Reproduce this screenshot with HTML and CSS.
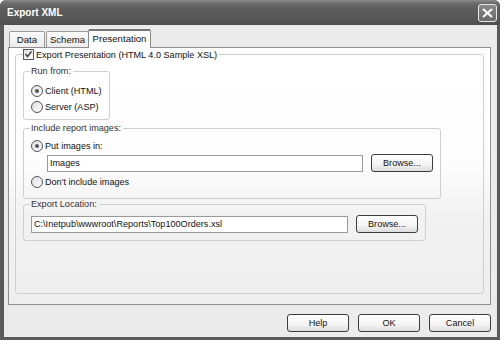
FILE: index.html
```html
<!DOCTYPE html>
<html lang="en">
<head>
    <meta charset="UTF-8">
    <title>Export XML</title>
    <link rel="stylesheet" href="styles.css">
</head>
<body>
    <div class="window">
        <div class="titlebar">
            <span class="title">Export XML</span>
            <div class="close-btn">
                <svg width="11" height="10" viewBox="0 0 11 10">
                    <path d="M1 1 L10 9 M10 1 L1 9" stroke="#fff" stroke-width="2" fill="none"/>
                </svg>
            </div>
        </div>
        <div class="content">
            <div class="tabs">
                <div class="tab tab-data">Data</div>
                <div class="tab tab-schema">Schema</div>
                <div class="tab tab-active">Presentation</div>
            </div>
            <div class="panel">
                <fieldset class="group group-main">
                    <legend class="check-legend">
                        <span class="checkbox">
                            <svg width="9" height="9" viewBox="0 0 9 9">
                                <path d="M1.5 4 L3.5 6.5 L7.5 1.5" stroke="#444" stroke-width="1.5" fill="none"/>
                            </svg>
                        </span>
                        Export Presentation (HTML 4.0 Sample XSL)
                    </legend>

                    <fieldset class="group group-run">
                        <legend>Run from:</legend>
                        <div class="option"><span class="radio checked"></span>Client (HTML)</div>
                        <div class="option"><span class="radio"></span>Server (ASP)</div>
                    </fieldset>

                    <fieldset class="group group-images">
                        <legend>Include report images:</legend>
                        <div class="option"><span class="radio checked"></span>Put images in:</div>
                        <div class="field-row indent">
                            <div class="textbox textbox-images">Images</div>
                            <div class="btn btn-browse">Browse...</div>
                        </div>
                        <div class="option"><span class="radio"></span>Don't include images</div>
                    </fieldset>

                    <fieldset class="group group-location">
                        <legend>Export Location:</legend>
                        <div class="field-row">
                            <div class="textbox textbox-location">C:\Inetpub\wwwroot\Reports\Top100Orders.xsl</div>
                            <div class="btn btn-browse">Browse...</div>
                        </div>
                    </fieldset>
                </fieldset>
            </div>
            <div class="footer">
                <div class="btn btn-footer">Help</div>
                <div class="btn btn-footer">OK</div>
                <div class="btn btn-footer">Cancel</div>
            </div>
        </div>
    </div>
</body>
</html>
```

FILE: styles.css
```css
/* XP style dialog, greyscale */
body {
    margin: 0;
    font-family: "Liberation Sans", Arial, sans-serif;
    font-size: 9.1px;
    color: #111;
}

.window {
    width: 500px;
    height: 340px;
    box-sizing: border-box;
    background: #5a5a5a;
    border-radius: 6px 6px 0 0;
    display: flex;
    flex-direction: column;
    overflow: hidden;
}

.titlebar {
    height: 25px;
    flex-shrink: 0;
    display: flex;
    align-items: center;
    justify-content: space-between;
    padding: 0 3px 0 7px;
    background: linear-gradient(#8c8c8c 0px, #6e6e6e 3px, #5e5e5e 8px, #575757 18px, #4e4e4e 25px);
}

.title {
    color: #fff;
    font-size: 10px;
    font-weight: bold;
}

.close-btn {
    width: 17px;
    height: 16px;
    border: 1px solid #e8e8e8;
    border-radius: 3px;
    background: linear-gradient(#8a8a8a, #6a6a6a);
    display: flex;
    justify-content: center;
    align-items: center;
    margin-top: 1px;
}

.content {
    flex: 1;
    margin: 0 3px 3px 4px;
    background: #ebebeb;
    display: flex;
    flex-direction: column;
    padding: 3px 6px 0 4px;
}

.tabs {
    display: flex;
    align-items: flex-end;
    padding-left: 1px;
    height: 19px;
    position: relative;
    z-index: 1;
}

.tab {
    height: 15px;
    border: 1px solid #9c9c9c;
    border-bottom: none;
    border-radius: 2px 2px 0 0;
    background: linear-gradient(#fbfbfb, #ececec);
    display: flex;
    align-items: center;
    justify-content: center;
    padding: 0 5px;
    font-size: 9.6px;
}

.tab-data {
    width: 24px;
    margin-right: 1px;
}

.tab-schema {
    width: 31px;
}

.tab-active {
    height: 19px;
    background: #fff;
    border-color: #8a8a8a;
    border-top: 2px solid #777;
    box-sizing: border-box;
    width: 63px;
    padding-bottom: 2px;
    margin-bottom: -1px;
    margin-left: -1px;
}

.panel {
    height: 256px;
    border: 1px solid #8f8f8f;
    background: linear-gradient(#ffffff 0%, #fdfdfd 45%, #f2f2f2 65%, #eeeeee 100%);
    padding: 0 6px;
}

.group {
    margin: 0;
    border: 1px solid #cfcfcf;
    border-radius: 3px;
    padding: 0 7px;
}

.group legend {
    padding: 0 2px 0 1px;
    margin-left: -1px;
    color: #333;
}

.group-main {
    margin-top: 1px;
    height: 245px;
    box-sizing: border-box;
    padding: 0 7px;
}

.check-legend {
    display: flex;
    align-items: center;
    gap: 2px;
    color: #111 !important;
    padding-left: 0 !important;
    margin-left: 0 !important;
}

.checkbox {
    width: 11px;
    height: 11px;
    box-sizing: border-box;
    border: 1px solid #5a5a5a;
    background: linear-gradient(135deg, #e2e2e2, #fafafa);
    display: flex;
    justify-content: center;
    align-items: center;
}

.group-run {
    width: 87px;
    box-sizing: border-box;
    margin-top: 6px;
    padding-bottom: 4px;
}

.group-images {
    width: 418px;
    box-sizing: border-box;
    margin-top: 3px;
    padding-bottom: 8px;
}

.group-location {
    width: 402px;
    box-sizing: border-box;
    margin-top: 0;
    padding-bottom: 7px;
}

.option {
    display: flex;
    align-items: center;
    height: 16px;
    gap: 2px;
}

.group-run legend + .option {
    margin-top: 7px;
}

.group-images legend + .option {
    margin-top: 5px;
}

.radio {
    width: 12px;
    height: 12px;
    box-sizing: border-box;
    border: 1px solid #555;
    border-radius: 50%;
    background: linear-gradient(135deg, #e0e0e0, #fcfcfc);
    display: flex;
    justify-content: center;
    align-items: center;
}

.radio.checked::after {
    content: "";
    width: 4px;
    height: 4px;
    border-radius: 50%;
    background: #555;
}

.field-row {
    display: flex;
    align-items: center;
    gap: 8px;
    margin-top: 6px;
}

.field-row.indent {
    padding-left: 16px;
    margin-top: 0;
    margin-bottom: 2px;
}

.textbox {
    height: 17px;
    box-sizing: border-box;
    border: 1px solid #9a9a9a;
    background: #fff;
    display: flex;
    align-items: center;
    padding-left: 2px;
    color: #111;
}

.textbox-images {
    width: 316px;
}

.textbox-location {
    width: 317px;
}

.btn {
    height: 18px;
    box-sizing: border-box;
    border: 1px solid #3c3c3c;
    border-radius: 3px;
    background: linear-gradient(#ffffff, #f4f4f4 60%, #dcdcdc);
    display: flex;
    justify-content: center;
    align-items: center;
    color: #111;
}

.btn-browse {
    width: 62px;
}

.footer {
    display: flex;
    justify-content: flex-end;
    gap: 9px;
    margin-top: 9px;
}

.btn-footer {
    width: 62px;
}
```
